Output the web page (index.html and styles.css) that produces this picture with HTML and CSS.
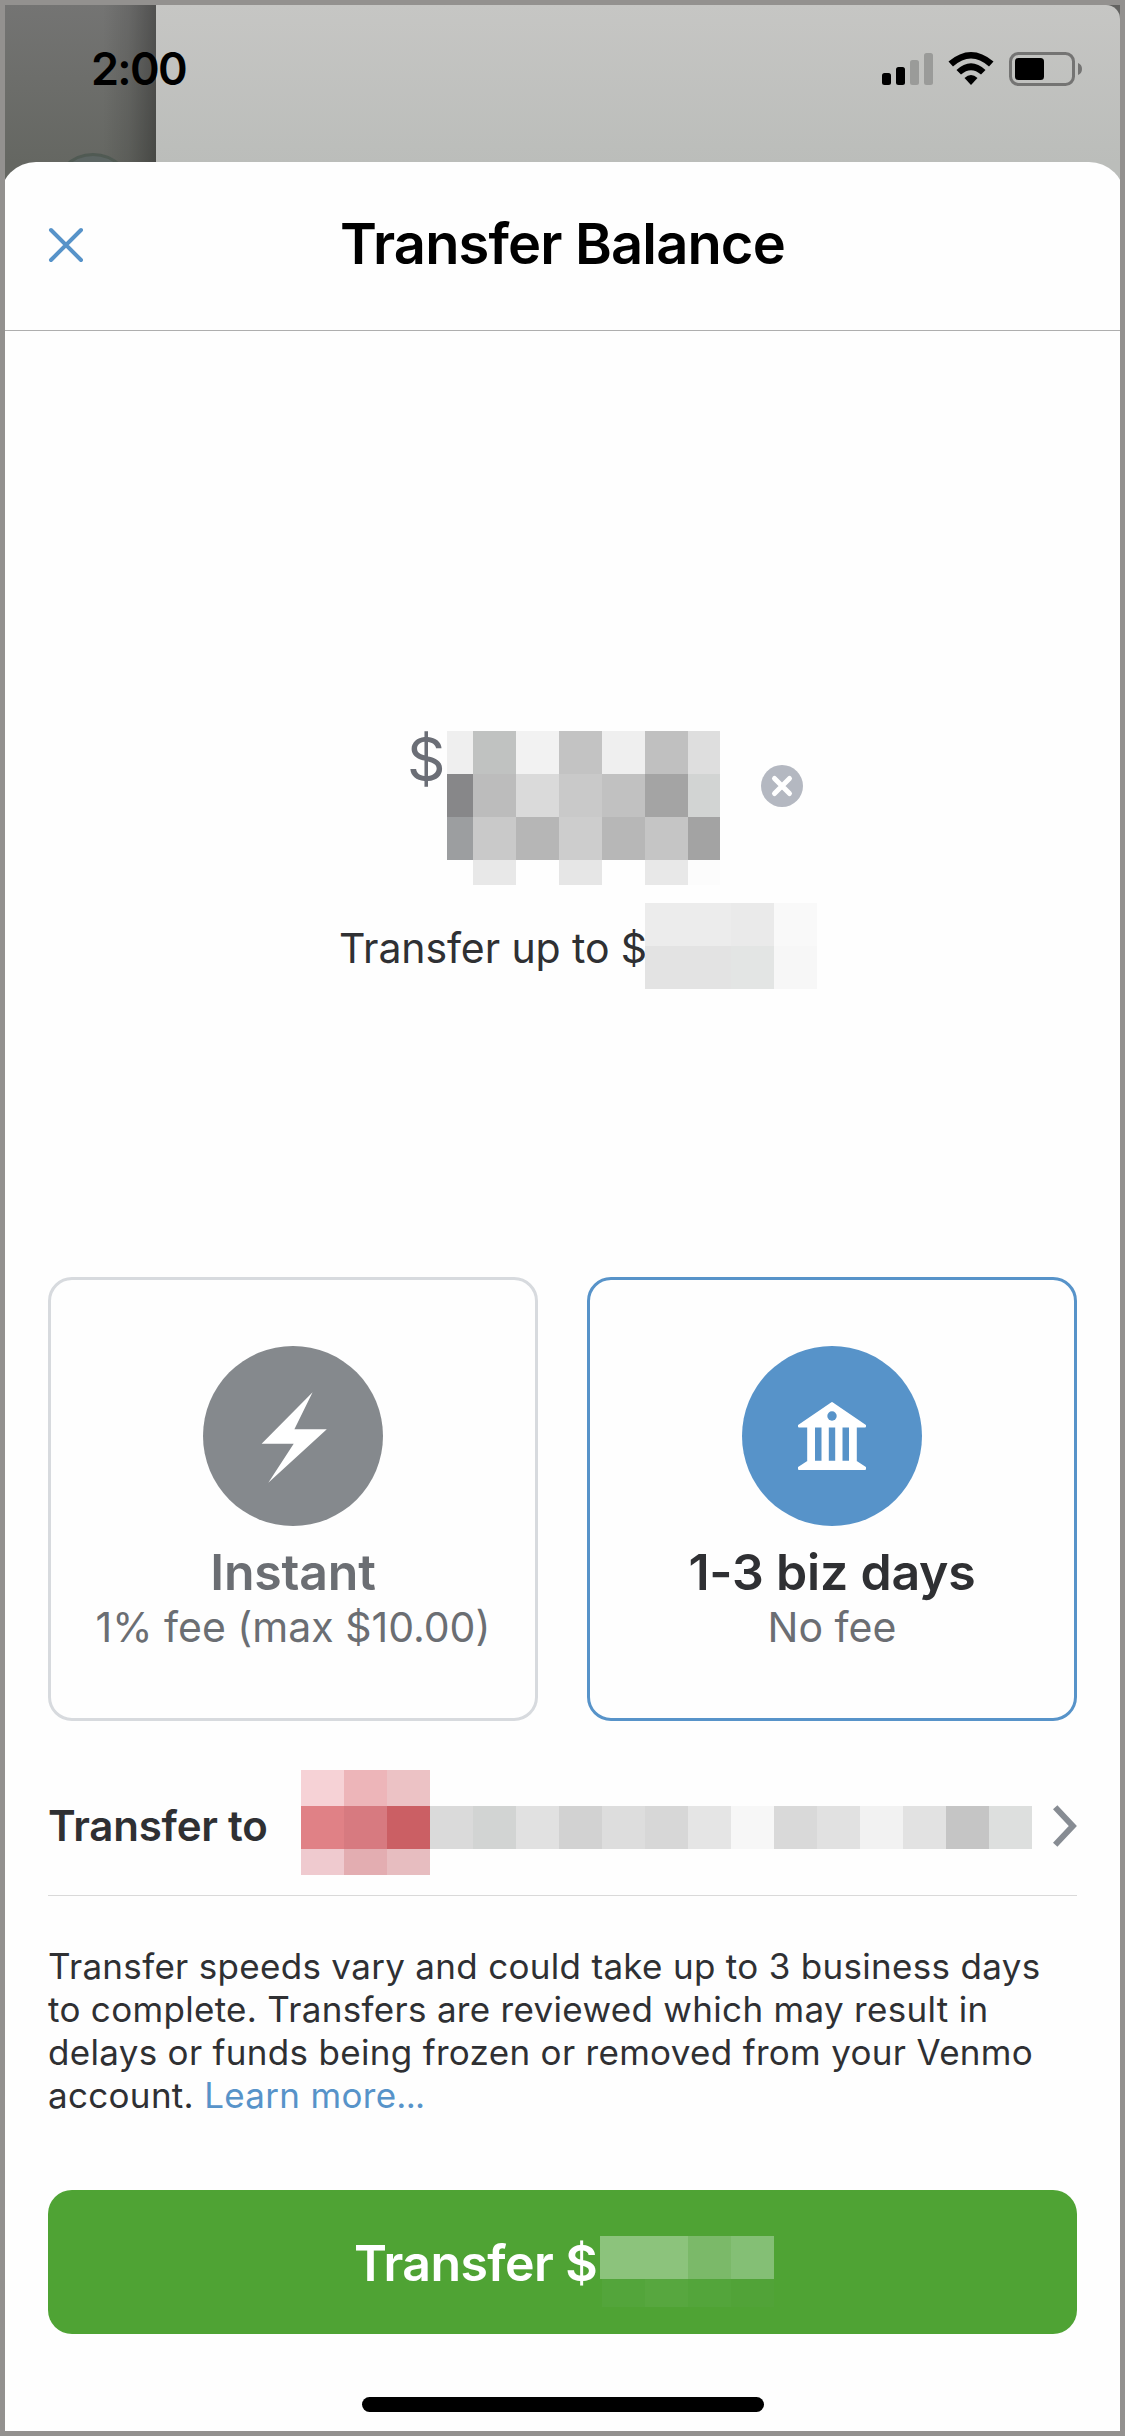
FILE: index.html
```html
<!DOCTYPE html>
<html lang="en">
<head>
<meta charset="utf-8">
<title>Transfer Balance</title>
<link rel="stylesheet" href="styles.css">
</head>
<body>
<div class="screen">
  <header class="status">
    <div class="drawer"><svg class="avatar" width="80" height="80" viewBox="0 0 80 80"><circle cx="40" cy="40" r="38.5" fill="#5c6563" stroke="#505a53" stroke-width="3"/></svg></div>
    <div class="backdrop"></div>
    <time class="clock">2:00</time>
    <svg class="indicators" width="200" height="34" viewBox="882 52 200 34">
      <rect x="882" y="73" width="9" height="12" rx="2.5"/>
      <rect x="896" y="67" width="9" height="18" rx="2.5"/>
      <rect x="910" y="60" width="9" height="25" rx="2.5" fill="#9a9b99"/>
      <rect x="924" y="53" width="9" height="32" rx="2.5" fill="#9a9b99"/>
      <path d="M948.5 61.5Q971 42.5 993.5 61.5L989 66.500Q971 50.500 953 66.500Z"/>
      <path d="M956.500 70Q971 56.500 985.500 70L981 74.500Q971 66 961 74.500Z"/>
      <path d="M964.500 78Q971 72 977.500 78L971 85Z"/>
      <rect x="1010.500" y="53.500" width="63" height="31" rx="8" fill="none" stroke="#747473" stroke-width="3"/>
      <rect x="1015" y="58" width="29" height="22" rx="3.500"/>
      <path d="M1078 63Q1082 64.500 1082 69T1078 75Z" fill="#747473"/>
    </svg>
  </header>
  <main class="sheet">
    <div class="titlebar">
      <svg class="close" width="36" height="36" viewBox="0 0 36 36"><path d="M3 3L33 33M33 3L3 33" stroke="#5793c9" stroke-width="4" stroke-linecap="round"/></svg>
      <h1 class="title">Transfer Balance</h1>
    </div>
    <section class="amount">
      <div class="amount-row">
        <span class="currency">$</span>
        <svg width="273" height="154" viewBox="447 731 273 154" shape-rendering="crispEdges">
          <path d="M447 731h26v43h-26z" fill="#efefef"/><path d="M473 731h43v43h-43z" fill="#c0c2c1"/><path d="M516 731h43v43h-43z" fill="#f2f2f2"/><path d="M559 731h43v43h-43z" fill="#c3c3c3"/><path d="M602 731h43v43h-43z" fill="#efefef"/><path d="M645 731h43v43h-43z" fill="#c0c0c0"/><path d="M688 731h32v43h-32z" fill="#dedede"/>
          <path d="M447 774h26v43h-26z" fill="#878789"/><path d="M473 774h43v43h-43z" fill="#bcbcbc"/><path d="M516 774h43v43h-43z" fill="#dadada"/><path d="M559 774h43v43h-43z" fill="#c9c9c9"/><path d="M602 774h43v43h-43z" fill="#c1c1c1"/><path d="M645 774h43v43h-43z" fill="#a4a4a4"/><path d="M688 774h32v43h-32z" fill="#d2d4d3"/>
          <path d="M447 817h26v43h-26z" fill="#9c9ea0"/><path d="M473 817h43v43h-43z" fill="#c9c9c9"/><path d="M516 817h43v43h-43z" fill="#b6b6b6"/><path d="M559 817h43v43h-43z" fill="#cdcdcd"/><path d="M602 817h43v43h-43z" fill="#b7b7b7"/><path d="M645 817h43v43h-43z" fill="#c5c5c5"/><path d="M688 817h32v43h-32z" fill="#a3a3a3"/>
          <path d="M473 860h43v25h-43z" fill="#e8e8e8"/><path d="M559 860h43v25h-43z" fill="#e6e6e6"/><path d="M645 860h43v25h-43z" fill="#e8e8e8"/><path d="M688 860h32v25h-32z" fill="#fcfcfc"/>
        </svg>
        <svg class="clear" width="42" height="42" viewBox="0 0 42 42"><circle cx="21" cy="21" r="21" fill="#b4b8c1"/><path d="M13.500 13.500L28.500 28.500M28.500 13.500L13.500 28.500" stroke="#fff" stroke-width="5" stroke-linecap="round"/></svg>
      </div>
      <div class="limit-row">
        <span class="limit">Transfer up to $</span>
        <svg width="172" height="86" viewBox="645 903 172 86" shape-rendering="crispEdges"><path d="M645 903h86v43h-86z" fill="#ececec"/><path d="M731 903h43v43h-43z" fill="#eaeaea"/><path d="M774 903h43v43h-43z" fill="#f9f9f9"/><path d="M645 946h86v43h-86z" fill="#e3e3e3"/><path d="M731 946h43v43h-43z" fill="#e3e5e4"/><path d="M774 946h43v43h-43z" fill="#f7f7f7"/></svg>
      </div>
    </section>
    <section class="speeds">
      <div class="card">
        <svg width="180" height="180" viewBox="0 0 180 180"><circle cx="90" cy="90" r="90" fill="#85898d"/><path d="M109.600 46.300L91.400 83.300H123.800L65.300 136.700L90.700 97.700H58.600Z" fill="#fff"/></svg>
        <div class="speed-name muted">Instant</div>
        <div class="speed-fee">1% fee (max $10.00)</div>
      </div>
      <div class="card selected">
        <svg width="180" height="180" viewBox="0 0 180 180"><circle cx="90" cy="90" r="90" fill="#5793c9"/><path fill="#fff" stroke="#fff" stroke-width="2" stroke-linejoin="round" d="M90 57L57 79.500V80.500H66.200V115.500L57 121.500V123H123V121.500L113.800 115.500V80.500H123V79.500Z"/><path fill="#5793c9" d="M73 81.500h6.500v33.200H73zM86.800 81.500h6.400v33.200h-6.400zM100.500 81.500h6.500v33.200h-6.500z"/><circle cx="90" cy="70" r="4.700" fill="#5793c9"/></svg>
        <div class="speed-name">1-3 biz days</div>
        <div class="speed-fee">No fee</div>
      </div>
    </section>
    <section class="destination">
      <span class="dest-label">Transfer to</span>
      <svg class="account" width="731" height="105" viewBox="301 1770 731 105" shape-rendering="crispEdges">
        <path d="M301 1770h43v36h-43z" fill="#f6d2d6"/><path d="M344 1770h43v36h-43z" fill="#edb5b9"/><path d="M387 1770h43v36h-43z" fill="#ecc2c5"/>
        <path d="M301 1806h43v43h-43z" fill="#e08186"/><path d="M344 1806h43v43h-43z" fill="#d77a80"/><path d="M387 1806h43v43h-43z" fill="#cb5f64"/>
        <path d="M301 1849h43v26h-43z" fill="#efcacf"/><path d="M344 1849h43v26h-43z" fill="#e3adb1"/><path d="M387 1849h43v26h-43z" fill="#e7bdc0"/>
        <path d="M430 1806h43v43h-43z" fill="#dadada"/><path d="M473 1806h43v43h-43z" fill="#d2d4d3"/><path d="M516 1806h43v43h-43z" fill="#e1e1e1"/><path d="M559 1806h43v43h-43z" fill="#d2d2d2"/><path d="M602 1806h43v43h-43z" fill="#ddd"/><path d="M645 1806h43v43h-43z" fill="#d7d7d7"/><path d="M688 1806h43v43h-43z" fill="#e5e5e5"/><path d="M731 1806h43v43h-43z" fill="#f7f7f7"/><path d="M774 1806h43v43h-43z" fill="#d9d9d9"/><path d="M817 1806h43v43h-43z" fill="#e1e1e1"/><path d="M860 1806h43v43h-43z" fill="#f2f2f2"/><path d="M903 1806h43v43h-43z" fill="#e2e2e2"/><path d="M946 1806h43v43h-43z" fill="#c5c5c5"/><path d="M989 1806h43v43h-43z" fill="#dddfde"/>
      </svg>
      <svg class="chevron" width="24" height="42" viewBox="0 0 24 42"><path d="M2.200 2.200L19.800 21L2.200 39.800" fill="none" stroke="#878c93" stroke-width="6"/></svg>
    </section>
    <p class="notice">Transfer speeds vary and could take up to 3 business days<br>to complete. Transfers are reviewed which may result in<br>delays or funds being frozen or removed from your Venmo<br>account. <a class="link">Learn more<span class="dots">...</span></a></p>
    <div class="submit">
      <span class="submit-label">Transfer $</span>
      <svg class="submit-amount" width="174" height="71" viewBox="600 2236 174 71" shape-rendering="crispEdges"><path d="M600 2236h88v43h-88z" fill="#8cc37c"/><path d="M688 2236h43v43h-43z" fill="#7bb969"/><path d="M731 2236h43v43h-43z" fill="#84bf75"/><path d="M602 2279h43v28h-43zM688 2279h43v28h-43z" fill="#53a53b"/><path d="M645 2279h43v28h-43z" fill="#57a73f"/><path d="M731 2279h43v28h-43z" fill="#51a338"/></svg>
    </div>
    <div class="home"></div>
  </main>
</div>
</body>
</html>
```
FILE: styles.css
```css
* { box-sizing: border-box; }
body { margin: 0; font-family: Inter, "Liberation Sans", sans-serif; color: #2f3033; }
.screen { width: 1125px; height: 2436px; border: 5px solid #93918f; background: #bbbdba; overflow: hidden; }
.status { position: relative; display: flex; height: 187px; background: #636361; }
.drawer { position: relative; width: 151px; overflow: hidden; background: linear-gradient(90deg, transparent 65%, rgba(0,0,0,.1) 82%, rgba(0,0,0,.3)), linear-gradient(#747473, #656762 157px); }
.avatar { position: absolute; left: 48px; top: 148px; }
.backdrop { flex: 1; border-top-right-radius: 14px; background: linear-gradient(#c6c6c4, #bbbdba 157px); }
.clock { position: absolute; left: 86px; top: 36px; font-size: 45px; font-weight: 600; line-height: 56px; letter-spacing: -1.7px; color: #000; }
.indicators { position: absolute; left: 877px; top: 47px; }
.sheet { position: relative; display: flex; flex-direction: column; width: 1125px; height: 2274px; margin: -30px 0 0 -5px; padding: 0 5px; border-radius: 36px 36px 0 0; background: #fefefe; }
.titlebar { display: grid; grid-template-columns: 120px 1fr 120px; align-items: center; height: 169px; border-bottom: 1px solid #aeaeae; }
.close { margin: 0 0 2px 43px; }
.title { margin: 0 0 5px; font-size: 56px; font-weight: 600; line-height: 68px; letter-spacing: -0.85px; text-align: center; color: #000; white-space: nowrap; }
.amount { padding-top: 400px; }
.amount-row { display: flex; height: 154px; padding-left: 402px; }
.currency { width: 40px; margin-top: -2px; font-size: 60px; line-height: 60px; color: #6b6e76; }
.clear { margin: 34px 0 0 41px; }
.limit-row { display: flex; align-items: center; margin-top: 18px; height: 86px; padding-left: 334px; }
.limit { width: 306px; padding-top: 4px; font-size: 41px; line-height: 50px; letter-spacing: -0.1px; white-space: nowrap; }
.speeds { display: grid; grid-template-columns: 490px 490px; gap: 49px; margin: 288px 43px 0; }
.card { display: flex; flex-direction: column; align-items: center; height: 444px; padding-top: 66px; border: 3px solid #d7dade; border-radius: 24px; }
.selected { border-color: #5793c9; }
.speed-name { margin-top: 16px; font-size: 50px; font-weight: 600; line-height: 60px; letter-spacing: -0.2px; }
.muted { color: #6b6e73; }
.speed-fee { font-size: 41px; line-height: 50px; color: #6b6e73; }
.destination { display: flex; align-items: center; height: 175px; margin: 0 43px; padding-top: 28px; border-bottom: 1px solid #d9d9d9; }
.dest-label { width: 253px; padding-top: 7px; font-size: 42px; font-weight: 600; letter-spacing: -0.2px; white-space: nowrap; }
.chevron { margin: 8px 0 0 auto; }
.notice { margin: 49px 43px 0; font-size: 35px; line-height: 43px; letter-spacing: 0.31px; white-space: nowrap; }
.link { color: #5793c9; }
.dots { letter-spacing: -0.8px; }
.submit { display: flex; align-items: center; height: 144px; margin: 73px 43px 0; padding-left: 306px; border-radius: 24px; background: #4fa334; color: #fff; }
.submit-label { width: 246px; padding-top: 2px; font-size: 50px; font-weight: 600; letter-spacing: -0.6px; white-space: nowrap; }
.submit-amount { margin-top: 19px; }
.home { width: 402px; height: 15px; margin: 63px 0 0 357px; border-radius: 7.5px; background: #000; }
```
